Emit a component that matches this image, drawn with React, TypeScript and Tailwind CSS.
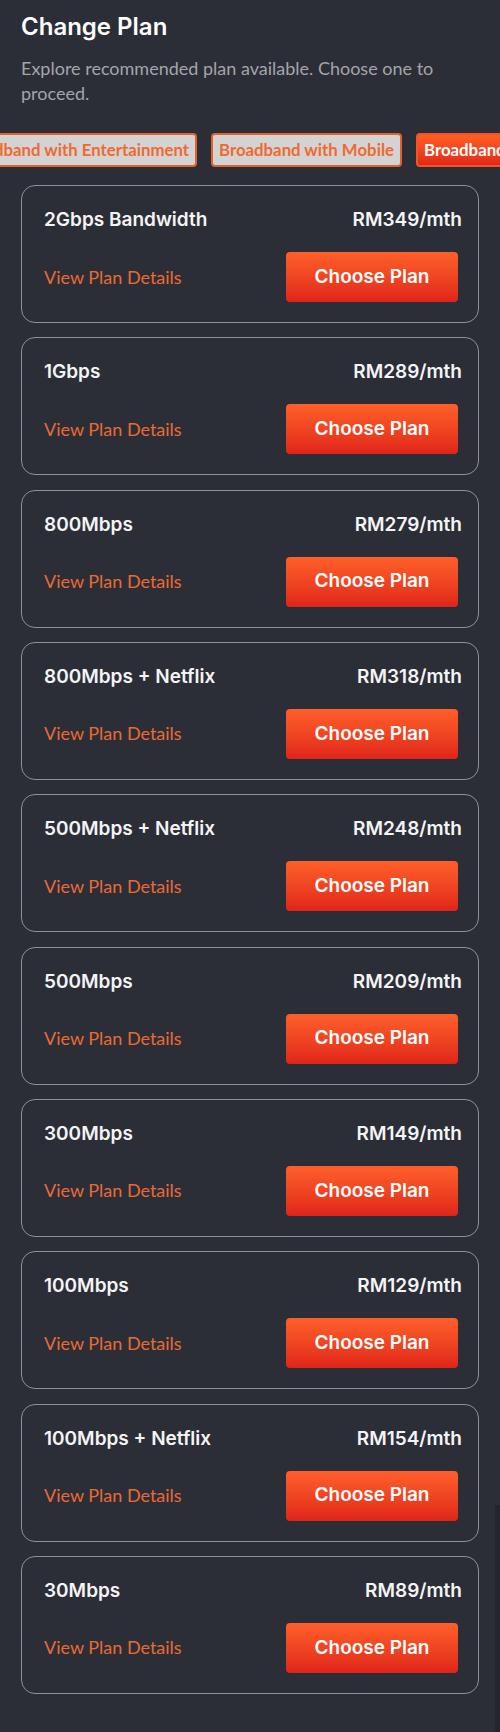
const plans = [
  { name: '2Gbps Bandwidth', price: 'RM349/mth' },
  { name: '1Gbps', price: 'RM289/mth' },
  { name: '800Mbps', price: 'RM279/mth' },
  { name: '800Mbps + Netflix', price: 'RM318/mth' },
  { name: '500Mbps + Netflix', price: 'RM248/mth' },
  { name: '500Mbps', price: 'RM209/mth' },
  { name: '300Mbps', price: 'RM149/mth' },
  { name: '100Mbps', price: 'RM129/mth' },
  { name: '100Mbps + Netflix', price: 'RM154/mth' },
  { name: '30Mbps', price: 'RM89/mth' },
];

const heading = "font-['Inter','Noto_Sans',sans-serif]";
const body = "font-['Lato','Liberation_Sans',sans-serif]";

function Tab({ label, active }: { label: string; active?: boolean }) {
  if (active) {
    return (
      <div className={`${body} shrink-0 whitespace-nowrap rounded-[4px] border-2 border-[#f4551f] bg-gradient-to-b from-[#ff5e25] to-[#e2261a] px-[6px] py-[5px] text-[16.8px] leading-[20px] font-bold text-white`}>
        {label}
      </div>
    );
  }
  return (
    <div className={`${body} shrink-0 whitespace-nowrap rounded-[4px] border-2 border-[#e2622c] bg-[#d3d3d3] px-[6px] py-[5px] text-[16.8px] leading-[20px] font-bold text-[#f06a2f]`}>
      {label}
    </div>
  );
}

function PlanCard({ name, price }: { name: string; price: string }) {
  return (
    <div className="rounded-[14px] border border-[#8e9198] pl-[22px] pr-[16px] pt-[23px] pb-[20px]">
      <div className={`${heading} flex items-center justify-between text-[19px] leading-[22px] font-semibold text-[#f4f4f5]`}>
        <span>{name}</span>
        <span>{price}</span>
      </div>
      <div className="mt-[21px] flex items-center justify-between">
        <span className={`${body} text-[18px] text-[#ea6a33]`}>View Plan Details</span>
        <button className={`${heading} mr-[4px] h-[50px] w-[172px] rounded-[4px] bg-gradient-to-b from-[#ff5f2a] to-[#e0231a] text-[19px] font-semibold text-white`}>
          Choose Plan
        </button>
      </div>
    </div>
  );
}

export default function App() {
  return (
    <main className="relative min-h-screen overflow-hidden bg-[#2b2e37] pt-[11px] pb-[37px]">
      {/* Header */}
      <div className="px-[21px]">
        <h1 className={`${heading} text-[24px] leading-[32px] font-semibold text-white`}>Change Plan</h1>
        <p className={`${body} mt-[13px] text-[18px] leading-[25px] text-[#a3a5aa]`}>
          Explore recommended plan available. Choose one to proceed.
        </p>
      </div>

      {/* Category tabs */}
      <div className="mt-[27px] flex gap-[14px] overflow-hidden">
        <div className="flex w-[197px] shrink-0 justify-end">
          <Tab label="Broadband with Entertainment" />
        </div>
        <Tab label="Broadband with Mobile" />
        <Tab label="Broadband Only" active />
      </div>

      {/* Plans */}
      <div className="mt-[18px] flex flex-col gap-[14.33px] px-[21px]">
        {plans.map((p) => (
          <PlanCard key={p.name} name={p.name} price={p.price} />
        ))}
      </div>

      <div className="absolute right-0 top-[1505px] bottom-0 w-[5px] bg-[#24262d]" />
    </main>
  );
}
